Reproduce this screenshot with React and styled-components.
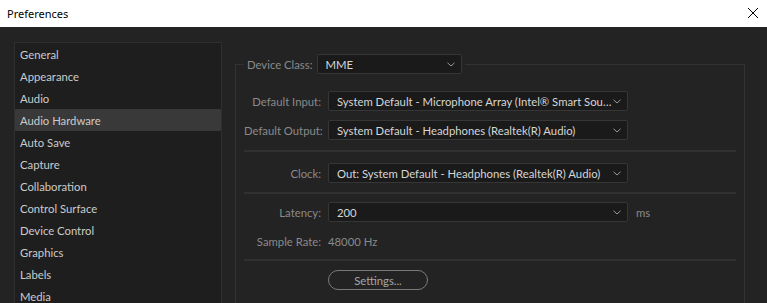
import React from "react";
import styled, { createGlobalStyle } from "styled-components";

const GlobalStyle = createGlobalStyle`
  html, body {
    margin: 0;
    padding: 0;
    overflow: hidden;
    background: #232323;
  }
  body {
    font-family: Lato, "Open Sans", sans-serif;
    font-size: 11.3px;
  }
`;

const Window = styled.div`
  width: 767px;
  height: 303px;
  display: flex;
  flex-direction: column;
  background: #232323;
  overflow: hidden;
`;

const TitleBar = styled.div`
  height: 27px;
  flex: none;
  display: flex;
  align-items: center;
  justify-content: space-between;
  padding: 0 8px 0 7px;
  background: #ffffff;
  color: #000000;
  font-family: "Noto Sans", "Liberation Sans", sans-serif;
  font-size: 11px;
`;

const CloseButton = styled.div`
  width: 12px;
  height: 12px;
  display: flex;
  margin-bottom: 2px;
`;

const Body = styled.div`
  flex: 1;
  display: flex;
  align-items: flex-start;
  padding: 15px 0 0 14px;
`;

const Sidebar = styled.ul`
  list-style: none;
  margin: 0;
  padding: 0;
  width: 206px;
  height: 420px;
  flex: none;
  background: #1e1e1e;
  border: 1px solid #2f2f2f;
`;

const SidebarItem = styled.li`
  height: 22px;
  display: flex;
  align-items: center;
  padding-left: 5px;
  color: #cbcbcb;
  background: ${(p) => (p.$active ? "#393939" : "transparent")};
`;

const Group = styled.fieldset`
  margin: 12px 0 0 13px;
  padding: 0 8px;
  width: 492px;
  height: 400px;
  flex: none;
  border: 1px solid #333333;
  display: flex;
  flex-direction: column;
  min-width: 0;
`;

const Legend = styled.legend`
  display: flex;
  align-items: center;
  gap: 5px;
  padding: 0 3px 0 3px;
  margin-left: 0;
`;

const Label = styled.span`
  color: #8a8a8a;
  white-space: nowrap;
`;

const RowLabel = styled(Label)`
  width: 77px;
  flex: none;
  text-align: right;
`;

const Row = styled.div`
  display: flex;
  align-items: center;
  gap: 7px;
  height: 20px;
  margin-top: ${(p) => p.$top}px;
`;

const Select = styled.div`
  width: ${(p) => p.$width}px;
  height: 20px;
  box-sizing: border-box;
  flex: none;
  display: flex;
  align-items: center;
  padding: 0 6px 0 ${(p) => p.$pad}px;
  background: #1a1a1a;
  border: 1px solid #363636;
  border-radius: 2px;
  color: #d6d6d6;
`;

const SelectText = styled.span`
  flex: 1;
  min-width: 0;
  overflow: hidden;
  white-space: nowrap;
  text-overflow: ellipsis;
`;

const Value = styled.span`
  color: #8a8a8a;
`;

const Unit = styled.span`
  color: #8a8a8a;
  margin-left: 1px;
`;

const Separator = styled.div`
  height: 2px;
  background: #313131;
  margin-top: ${(p) => p.$top}px;
`;

const Button = styled.div`
  width: 100px;
  height: 20px;
  box-sizing: border-box;
  margin: 9px 0 0 84px;
  display: flex;
  align-items: center;
  justify-content: center;
  border: 1px solid #7a7a7a;
  border-radius: 10px;
  color: #a6a6a6;
`;

const Chevron = () => (
  <svg width="8" height="5" viewBox="0 0 8 5">
    <path d="M0.5 0.8 L4 4 L7.5 0.8" fill="none" stroke="#9a9a9a" strokeWidth="1" />
  </svg>
);

const Dropdown = ({ width = 300, pad = 8, children }) => (
  <Select $width={width} $pad={pad}>
    <SelectText>{children}</SelectText>
    <Chevron />
  </Select>
);

const sections = [
  "General",
  "Appearance",
  "Audio",
  "Audio Hardware",
  "Auto Save",
  "Capture",
  "Collaboration",
  "Control Surface",
  "Device Control",
  "Graphics",
  "Labels",
  "Media",
  "Media Cache",
  "Memory",
  "Playback",
];

export default function App() {
  return (
    <Window>
      <GlobalStyle />
      <TitleBar>
        <span>Preferences</span>
        <CloseButton>
          <svg width="12" height="12" viewBox="0 0 12 12">
            <path d="M1 1 L11 11 M11 1 L1 11" stroke="#000" strokeWidth="1" />
          </svg>
        </CloseButton>
      </TitleBar>
      <Body>
        <Sidebar>
          {sections.map((s) => (
            <SidebarItem key={s} $active={s === "Audio Hardware"}>
              {s}
            </SidebarItem>
          ))}
        </Sidebar>
        <Group>
          <Legend>
            <Label>Device Class:</Label>
            <Dropdown width={145} pad={7}>MME</Dropdown>
          </Legend>
          <Row $top={17}>
            <RowLabel>Default Input:</RowLabel>
            <Dropdown>System Default - Microphone Array (Intel® Smart Sou…</Dropdown>
          </Row>
          <Row $top={9}>
            <RowLabel>Default Output:</RowLabel>
            <Dropdown>System Default - Headphones (Realtek(R) Audio)</Dropdown>
          </Row>
          <Separator $top={10} />
          <Row $top={11}>
            <RowLabel>Clock:</RowLabel>
            <Dropdown>Out: System Default - Headphones (Realtek(R) Audio)</Dropdown>
          </Row>
          <Separator $top={9} />
          <Row $top={8}>
            <RowLabel>Latency:</RowLabel>
            <Dropdown>200</Dropdown>
            <Unit>ms</Unit>
          </Row>
          <Row $top={9}>
            <RowLabel>Sample Rate:</RowLabel>
            <Value>48000 Hz</Value>
          </Row>
          <Separator $top={8} />
          <Button>Settings...</Button>
        </Group>
      </Body>
    </Window>
  );
}
